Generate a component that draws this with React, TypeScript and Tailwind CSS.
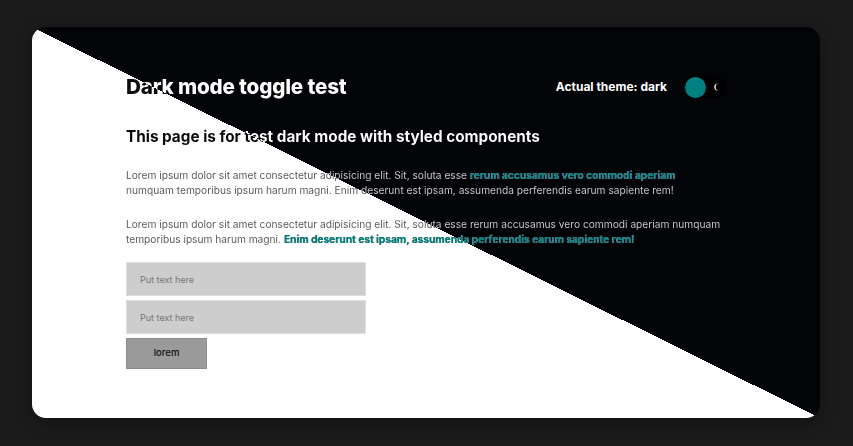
const font = { fontFamily: "Inter, 'Noto Sans', sans-serif" };

// text that flips colour along the card's diagonal (fixed background clipped to the glyphs)
const ink =
  "text-[#0b0b0b] bg-[linear-gradient(to_top_right,#0b0b0b_50%,#ffffff_50%)] bg-fixed bg-no-repeat bg-[length:788px_391px] bg-[position:32px_27px] bg-clip-text [-webkit-text-fill-color:transparent]";
const softInk =
  "text-[#555555] bg-[linear-gradient(to_top_right,#555555_50%,#d2d2d2_50%)] bg-fixed bg-no-repeat bg-[length:788px_391px] bg-[position:32px_27px] bg-clip-text [-webkit-text-fill-color:transparent]";
const accent = "font-bold text-[#008080] [-webkit-text-fill-color:#008080]";

const Moon = () => (
  <svg width="7" height="8" viewBox="0 0 7 8">
    <path d="M5 0.6A3.6 3.6 0 1 0 5 7.4A2.8 2.8 0 1 1 5 0.6Z" fill="#fff" />
  </svg>
);

const Input = () => (
  <input
    placeholder="Put text here"
    className="h-[34px] w-[240px] border border-[#dedede] bg-[#cdcdcd] px-[13px] text-[9px] outline-none placeholder:text-[#777]"
  />
);

export default function App() {
  return (
    <div className="h-[446px] w-full bg-[#1b1b1b] pt-[27px] pl-[32px]" style={font}>
      <div className="h-[391px] w-[788px] overflow-hidden rounded-[14px] bg-[linear-gradient(to_top_right,#ffffff_50%,#030407_50%)] shadow-[0_4px_16px_rgba(0,0,0,0.35)]">
        <div className="mx-auto w-[600px] pt-[46px]">
          {/* Header */}
          <div className="flex items-center justify-between">
            <h1 className={`text-[20.7px] leading-[28px] font-extrabold tracking-[-0.2px] ${ink}`}>Dark mode toggle test</h1>
            <div className="flex items-center gap-[18px]">
              <span className="text-[12px] font-bold text-white">Actual theme: dark</span>
              <div className="flex h-[22px] w-[41px] items-center rounded-full bg-black">
                <div className="h-[21px] w-[21px] rounded-full bg-[#008080]" />
                <div className="ml-[8px] flex items-center">
                  <Moon />
                </div>
              </div>
            </div>
          </div>

          <h2 className={`mt-[24px] text-[15.3px] leading-[24px] font-bold ${ink}`}>
            This page is for test dark mode with styled components
          </h2>

          <p className={`mt-[19px] text-[10.2px] leading-[15px] ${softInk}`}>
            Lorem ipsum dolor sit amet consectetur adipisicing elit. Sit, soluta esse{" "}
            <span className={accent}>rerum accusamus vero commodi aperiam</span> numquam temporibus ipsum harum magni.
            Enim deserunt est ipsam, assumenda perferendis earum sapiente rem!
          </p>

          <p className={`mt-[19px] text-[10.2px] leading-[15px] ${softInk}`}>
            Lorem ipsum dolor sit amet consectetur adipisicing elit. Sit, soluta esse rerum accusamus vero commodi aperiam
            numquam temporibus ipsum harum magni.{" "}
            <span className={accent}>Enim deserunt est ipsam, assumenda perferendis earum sapiente rem!</span>
          </p>

          {/* Form */}
          <div className="mt-[15px] flex flex-col gap-[4px]">
            <Input />
            <Input />
            <button className="h-[31px] w-[81px] border border-[#8c8c8c] bg-[#9a9a9a] text-[9.5px] font-medium text-[#111]">
              lorem
            </button>
          </div>
        </div>
      </div>
    </div>
  );
}
